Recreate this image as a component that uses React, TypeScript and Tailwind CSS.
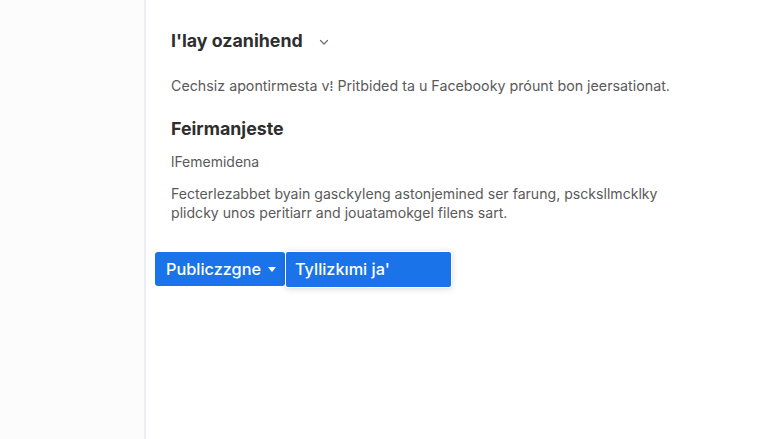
import React from "react";

export default function App() {
  return (
    <div
      className="flex h-[439px] w-[768px] overflow-hidden bg-white"
      style={{ fontFamily: "Inter, 'Noto Sans', sans-serif" }}
    >
      <aside className="w-[146px] shrink-0 border-r-2 border-[#eceef5] bg-[#fcfcfc]" />
      <main className="flex-1 pl-[25px] pt-[29px]">
        <div className="flex items-center gap-[15px]">
          <h1 className="text-[17.8px] font-bold leading-[24px] text-[#2e2e2e]">I'lay ozanihend</h1>
          <svg width="12" height="12" viewBox="0 0 12 12" fill="none" className="mt-[1px]">
            <path d="M2.5 4.5 6 8l3.5-3.5" stroke="#6b7280" strokeWidth="1.3" strokeLinecap="round" strokeLinejoin="round" />
          </svg>
        </div>
        <p className="mt-[23px] text-[14.25px] leading-[20px] text-[#5a5a5a]">
          Cechsiz apontirmesta v⁞ Pritbided ta u Facebooky próunt bon jeersationat.
        </p>
        <h2 className="mt-[21px] text-[17.8px] font-bold leading-[24px] text-[#2e2e2e]">Feirmanjeste</h2>
        <p className="mt-[11px] text-[14px] leading-[19px] text-[#5a5a5a]">lFememidena</p>
        <p className="mt-[13px] text-[14.1px] leading-[19px] text-[#5a5a5a]">
          Fecterlezabbet byain gasckyleng astonjemined ser farung, pscksllmcklky
          <br />
          plidcky unos peritiarr and jouatamokgel filens sart.
        </p>
        <div className="relative -ml-[16px] mt-[30px] flex">
          <button className="flex h-[34px] w-[130px] items-center gap-[7px] rounded-[3px] bg-[#1a73e8] pl-[11px] text-[16.3px] font-medium text-white">
            Publiczzgne
            <svg width="8" height="5" viewBox="0 0 8 5">
              <path d="M0 0h8L4 5z" fill="white" />
            </svg>
          </button>
          <div className="absolute left-[130px] top-[-1px] rounded-[3px] bg-white p-[1px] shadow-[0_1px_6px_rgba(0,0,0,0.15)]">
            <div className="flex h-[35px] w-[165px] items-center rounded-[2px] bg-[#1a73e8] pl-[9px] text-[16.3px] font-medium text-white">
              Tyllizkımi ja'
            </div>
          </div>
        </div>
      </main>
    </div>
  );
}
